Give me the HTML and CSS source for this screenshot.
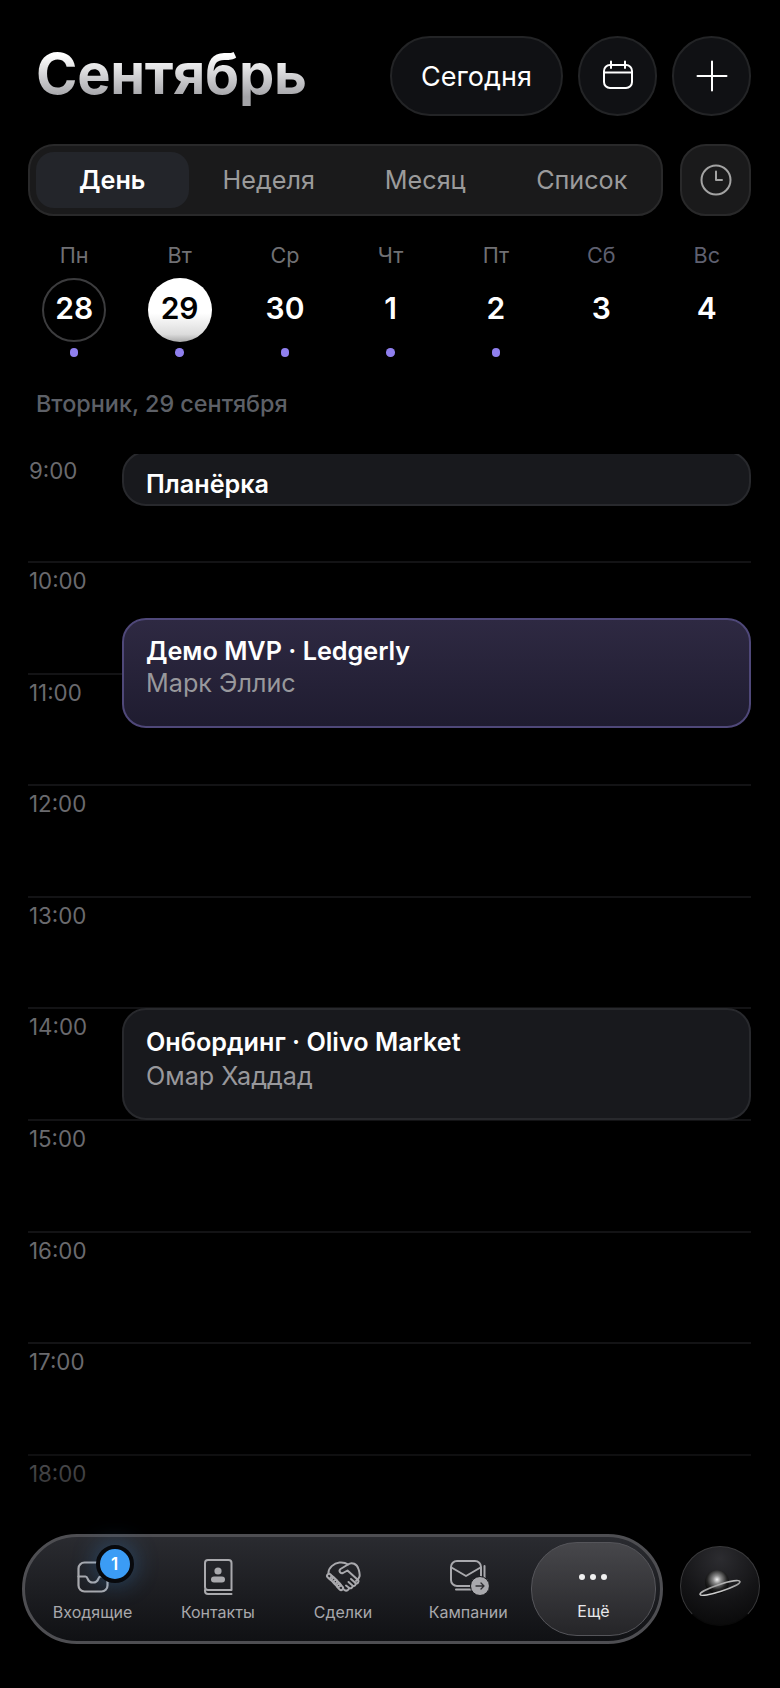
FILE: index.html
```html
<!DOCTYPE html>
<html lang="ru">
  <head>
    <meta charset="UTF-8" />
    <title>Сентябрь</title>
    <link rel="stylesheet" href="styles.css">
  </head>
  <body>
    <div id="app">
      <header class="top">
        <h1 class="month">Сентябрь</h1>
        <div class="top-btns">
          <button class="round-btn today-btn">Сегодня</button>
          <button class="round-btn">
            <svg width="32" height="32" viewBox="0 0 32 32" fill="none" stroke="#fff" stroke-width="2" stroke-linecap="round">
              <rect x="2" y="5" width="28" height="23" rx="6" />
              <path d="M2 12.5H30M9 1.5V8M23 1.5V8" />
            </svg>
          </button>
          <button class="round-btn">
            <svg width="32" height="32" viewBox="0 0 32 32" fill="none" stroke="#fff" stroke-width="2" stroke-linecap="round">
              <path d="M16 1.5V30.5M1.500 16H30.500" />
            </svg>
          </button>
        </div>
      </header>

      <div class="view-row">
        <div class="tabs">
          <div class="tab active">День</div>
          <div class="tab">Неделя</div>
          <div class="tab">Месяц</div>
          <div class="tab">Список</div>
        </div>
        <button class="clock-btn">
          <svg width="32" height="32" viewBox="0 0 32 32" fill="none" stroke="#a3a3a3" stroke-width="2" stroke-linecap="round" stroke-linejoin="round">
            <circle cx="16" cy="16" r="14.500" />
            <path d="M16 7.500V16H22" />
          </svg>
        </button>
      </div>

      <div class="week">
        <div class="day">
          <span class="day-name">Пн</span>
          <span class="day-num ring">28</span>
          <i class="day-dot"></i>
        </div>
        <div class="day">
          <span class="day-name">Вт</span>
          <span class="day-num today">29</span>
          <i class="day-dot"></i>
        </div>
        <div class="day">
          <span class="day-name">Ср</span>
          <span class="day-num">30</span>
          <i class="day-dot"></i>
        </div>
        <div class="day">
          <span class="day-name">Чт</span>
          <span class="day-num">1</span>
          <i class="day-dot"></i>
        </div>
        <div class="day">
          <span class="day-name">Пт</span>
          <span class="day-num">2</span>
          <i class="day-dot"></i>
        </div>
        <div class="day">
          <span class="day-name off">Сб</span>
          <span class="day-num">3</span>
        </div>
        <div class="day">
          <span class="day-name off">Вс</span>
          <span class="day-num">4</span>
        </div>
      </div>

      <div class="date-label">Вторник, 29 сентября</div>

      <div class="timeline">
        <div class="hours">
          <div class="hour first">9:00</div>
          <div class="hour">10:00</div>
          <div class="hour">11:00</div>
          <div class="hour">12:00</div>
          <div class="hour">13:00</div>
          <div class="hour">14:00</div>
          <div class="hour">15:00</div>
          <div class="hour">16:00</div>
          <div class="hour">17:00</div>
          <div class="hour">18:00</div>
        </div>

        <div class="event ev-standup">
          <div class="ev-title">Планёрка</div>
        </div>
        <div class="event purple ev-demo">
          <div class="ev-title">Демо MVP · Ledgerly</div>
          <div class="ev-sub">Марк Эллис</div>
        </div>
        <div class="event ev-onboard">
          <div class="ev-title">Онбординг · Olivo Market</div>
          <div class="ev-sub">Омар Хаддад</div>
        </div>
      </div>

      <div class="fade"></div>

      <nav class="nav">
        <div class="nav-item">
          <span class="nav-icon">
            <svg width="32" height="32" viewBox="0 0 32 32" fill="none" stroke="#a9a9ad" stroke-width="2.200" stroke-linecap="round" stroke-linejoin="round">
              <rect x="1.500" y="1.500" width="29" height="29" rx="6" />
              <path d="M1.500 15.500H8.500C9.800 15.500 10.200 16.500 10.700 17.800C11.500 20 13.500 21.500 16 21.500C18.500 21.500 20.500 20 21.300 17.800C21.800 16.500 22.200 15.500 23.500 15.500H30.500" />
            </svg>
            <b class="badge">1</b>
          </span>
          <span class="nav-label">Входящие</span>
        </div>
        <div class="nav-item">
          <span class="nav-icon">
            <svg width="32" height="36" viewBox="0 0 32 36" fill="none" stroke="#a9a9ad" stroke-width="2" stroke-linecap="round" stroke-linejoin="round">
              <path d="M29.500 31H6C4 31 3 29.800 3 28V4C3 2.300 4 1 6 1H26.500C28.300 1 29.500 2.300 29.500 4V31" />
              <path d="M3 31V32C3 33.800 4 35 6 35H29.500" />
              <circle cx="16" cy="12" r="3.600" fill="#a9a9ad" stroke="none" />
              <rect x="9" y="17.500" width="14" height="6" rx="3" fill="#a9a9ad" stroke="none" />
            </svg>
          </span>
          <span class="nav-label">Контакты</span>
        </div>
        <div class="nav-item">
          <span class="nav-icon">
            <svg width="36" height="32" viewBox="0 0 36 32" fill="none" stroke="#a9a9ad" stroke-width="2" stroke-linecap="round" stroke-linejoin="round">
              <path d="M3.500 12.500C3 7 9 2 14.500 1.500C18 1.200 21 2 23 3.500C27 .500 32 3 33.500 8C34.500 11 35 13.500 34.500 15.500C34 17.500 32.500 19 31 20" />
              <path d="M23 3.500L15.500 8C13.500 9.500 15 13 18 12L22.500 9.500L33 19C34.500 20.500 32.500 23.500 30.500 22L26 18" />
              <path d="M30.500 22C31.500 23.500 29.500 26 27.500 24.500L23.500 21M27.500 24.500C28 26.500 26 28 24 26.800L21 24.500M24 26.800C24 29 21.500 30.500 19.500 29L18.500 28.300" />
              <rect x="1.700" y="13.800" width="6.500" height="4" rx="2" transform="rotate(45 5 15.800)" />
              <rect x="4.700" y="17" width="8" height="4" rx="2" transform="rotate(45 8.700 19)" />
              <rect x="8" y="20.500" width="8" height="4" rx="2" transform="rotate(45 12 22.500)" />
              <rect x="11.500" y="24" width="7" height="4" rx="2" transform="rotate(45 15 26)" />
            </svg>
          </span>
          <span class="nav-label">Сделки</span>
        </div>
        <div class="nav-item">
          <span class="nav-icon campaign">
            <svg width="40" height="36" viewBox="0 0 40 36" fill="none" stroke="#a9a9ad" stroke-width="2" stroke-linecap="round" stroke-linejoin="round">
              <rect x="2" y="2" width="30" height="25" rx="6" />
              <path d="M2.500 8.500L17 17L31.500 8.500" />
              <path d="M35.500 7V24M7 30.500H24" />
              <circle cx="31" cy="27" r="9.500" fill="#a9a9ad" stroke="#17181b" stroke-width="1" />
              <path d="M27 27H35M32 24L35 27L32 30" stroke="#2f2f33" stroke-width="1.300" />
            </svg>
          </span>
          <span class="nav-label">Кампании</span>
        </div>
        <div class="nav-item current">
          <span class="dots"><i></i><i></i><i></i></span>
          <span class="nav-label">Ещё</span>
        </div>
      </nav>

      <button class="planet-btn">
        <svg width="78" height="78" viewBox="0 0 78 78" fill="none">
          <defs>
            <radialGradient id="sphere" cx="0.500" cy="0.400" r="0.550">
              <stop offset="0" stop-color="#f4f4f4" />
              <stop offset="0.300" stop-color="#8c8c8c" />
              <stop offset="0.750" stop-color="#222" />
              <stop offset="1" stop-color="#0a0a0a" />
            </radialGradient>
            <linearGradient id="ring" x1="0" y1="1" x2="1" y2="0">
              <stop offset="0" stop-color="#e4e4e4" />
              <stop offset="0.600" stop-color="#9a9a9a" />
              <stop offset="1" stop-color="#c8c8c8" />
            </linearGradient>
          </defs>
          <circle cx="36" cy="35" r="12" fill="url(#sphere)" />
          <ellipse cx="39" cy="41" rx="21" ry="3.500" transform="rotate(-18 39 41)" stroke="url(#ring)" stroke-width="1.500" />
        </svg>
      </button>
    </div>
  </body>
</html>
```

FILE: styles.css
```css
* {
  padding: 0px;
  margin: 0px;
  box-sizing: border-box;
}
html,
body {
  background: #000;
}
body {
  font-family: Inter, "Noto Sans", sans-serif;
  color: #fff;
}
button {
  font-family: inherit;
  color: inherit;
}
#app {
  width: 780px;
  height: 1688px;
  position: relative;
  overflow: hidden;
  display: flex;
  flex-direction: column;
}

/* шапка */
.top {
  display: flex;
  justify-content: space-between;
  align-items: flex-start;
  padding: 36px 29px 0 36px;
}
.month {
  font-size: 56px;
  font-weight: 700;
  line-height: 76px;
  letter-spacing: -0.3px;
  background: linear-gradient(180deg, #fff 25%, #a4a4a8 80%);
  -webkit-background-clip: text;
  background-clip: text;
  color: transparent;
}
.top-btns {
  display: flex;
  gap: 15px;
}
.round-btn {
  width: 79px;
  height: 80px;
  border-radius: 40px;
  background: #101114;
  border: 2px solid #232426;
  display: flex;
  align-items: center;
  justify-content: center;
}
.today-btn {
  width: 173px;
  font-size: 27px;
  font-weight: 400;
}

/* переключатель вида */
.view-row {
  display: flex;
  justify-content: space-between;
  margin-top: 28px;
  padding: 0 29px 0 28px;
}
.tabs {
  width: 635px;
  height: 72px;
  padding: 6px 3px 6px 6px;
  display: grid;
  grid-template-columns: repeat(4, 1fr);
  gap: 4px;
  background: #1a1a1b;
  border: 2px solid #29292a;
  border-radius: 26px;
}
.tab {
  display: flex;
  align-items: center;
  justify-content: center;
  font-size: 25.2px;
  color: #9b9b9b;
  border-radius: 18px;
}
.tab.active {
  background: #23252a;
  color: #fff;
  font-weight: 600;
}
.clock-btn {
  width: 71px;
  height: 72px;
  background: #1a1a1b;
  border: 2px solid #29292a;
  border-radius: 26px;
  display: flex;
  align-items: center;
  justify-content: center;
}

/* неделя */
.week {
  display: grid;
  grid-template-columns: repeat(7, 1fr);
  margin-top: 27px;
  padding: 0 20.500px 0 21.500px;
  height: 113px;
}
.day {
  display: flex;
  flex-direction: column;
  align-items: center;
}
.day-name {
  font-size: 21.6px;
  line-height: 24px;
  color: #707074;
}
.day-name.off {
  color: #5f6070;
}
.day-num {
  width: 64px;
  height: 64px;
  margin-top: 11px;
  padding-bottom: 5px;
  border-radius: 50%;
  font-size: 30px;
  font-weight: 600;
  display: flex;
  align-items: center;
  justify-content: center;
}
.day-num.ring {
  border: 2px solid #3c3c3e;
}
.day-num.today {
  color: #000;
  background: linear-gradient(180deg, #fff 55%, #dcdcdc 88%, #a9a9a9 100%);
}
.day-dot {
  width: 8.500px;
  height: 8.500px;
  margin-top: 6px;
  border-radius: 50%;
  background: #8f7fee;
}
.date-label {
  margin-top: 34px;
  padding-left: 36px;
  font-size: 23.4px;
  line-height: 28px;
  font-weight: 500;
  color: #5d6067;
}

/* сетка часов */
.timeline {
  flex: 1;
  margin-top: 36px;
  position: relative;
  overflow: hidden;
}
.hours {
  margin: -4.500px 29px 0 28px;
}
.hour {
  height: 111.6px;
  padding: 6px 0 0 1px;
  border-top: 2px solid #131315;
  font-size: 22.300px;
  line-height: 24px;
  color: #6a6a6e;
}
.hour.first {
  padding-top: 7px;
  border-top-color: transparent;
}
.event {
  position: absolute;
  left: 122px;
  width: 629px;
  padding: 17px 0 0 22px;
  background: #18191d;
  border: 2px solid #28292d;
  border-radius: 24px;
}
.event.purple {
  background: linear-gradient(180deg, #2e2942 0%, #1f1c30 100%);
  border-color: #4f4879;
}
.ev-standup {
  top: -3px;
  height: 55px;
  padding-top: 16px;
}
.ev-demo {
  top: 164px;
  height: 110px;
  padding-top: 16px;
}
.ev-onboard {
  top: 554px;
  height: 112px;
}
.ev-title {
  font-size: 25.2px;
  line-height: 30px;
  font-weight: 600;
}
.ev-sub {
  margin-top: 4px;
  font-size: 25.2px;
  line-height: 30px;
  color: #98989c;
}
.purple .ev-sub {
  margin-top: 2px;
}

/* нижнее меню */
.fade {
  position: absolute;
  left: 0;
  right: 0;
  bottom: 0;
  height: 260px;
  background: linear-gradient(180deg, rgba(0, 0, 0, 0) 0%, #000 45%);
}
.nav {
  position: absolute;
  left: 22px;
  top: 1534px;
  width: 641px;
  height: 110px;
  padding: 5px 4px 5px 5px;
  display: grid;
  grid-template-columns: repeat(5, 1fr);
  background: linear-gradient(180deg, #2a2b30 0%, #101114 100%);
  border: 3px solid #4e4e52;
  border-radius: 55px;
}
.nav-item {
  display: flex;
  flex-direction: column;
  align-items: center;
  justify-content: flex-end;
  padding-bottom: 13px;
}
.nav-item.current {
  background: linear-gradient(180deg, #47474b 0%, #252528 100%);
  border: 1px solid #55555a;
  border-radius: 46px;
}
.nav-icon {
  height: 36px;
  margin-bottom: 6px;
  display: flex;
  align-items: center;
  justify-content: center;
  position: relative;
}
.nav-icon.campaign {
  padding-left: 2px;
}
.nav-label {
  font-size: 16px;
  line-height: 22px;
  color: #a8a8ac;
}
.current .nav-label {
  color: #e8e8ea;
}
.dots {
  display: flex;
  gap: 5px;
  margin-bottom: 20px;
}
.dots i {
  width: 6px;
  height: 6px;
  border-radius: 50%;
  background: #f0f0f0;
}
.badge {
  position: absolute;
  left: 19px;
  top: -14px;
  width: 38px;
  height: 38px;
  border-radius: 50%;
  background: #3b9cf5;
  border: 4px solid #08090c;
  box-shadow: 0 0 24px rgba(59, 156, 245, 0.35);
  font-size: 17px;
  font-weight: 600;
  color: #fff;
  display: flex;
  align-items: center;
  justify-content: center;
}
.planet-btn {
  position: absolute;
  left: 680px;
  top: 1546px;
  width: 80px;
  height: 80px;
  border-radius: 50%;
  background: radial-gradient(circle at 50% 15%, #2c2c30 0%, #141416 55%, #060606 100%);
  border: 1px solid #3a3a3c;
  border-bottom-color: #0a0a0a;
  display: flex;
  align-items: center;
  justify-content: center;
}
```
